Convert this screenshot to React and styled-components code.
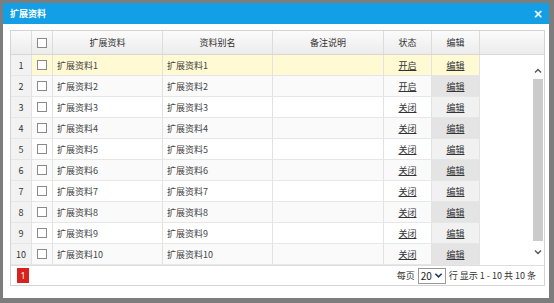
import React from 'react';
import styled, { createGlobalStyle } from 'styled-components';

const GlobalStyle = createGlobalStyle`
  html, body {
    margin: 0;
    padding: 0;
    background: #7d7d7d;
  }
  body {
    font-family: "Noto Sans CJK SC", "Noto Sans", sans-serif;
    font-size: 9px;
    color: #333;
  }
`;

const rows = [
  { id: 1, name: '扩展资料1', alias: '扩展资料1', note: '', on: true },
  { id: 2, name: '扩展资料2', alias: '扩展资料2', note: '', on: true },
  { id: 3, name: '扩展资料3', alias: '扩展资料3', note: '', on: false },
  { id: 4, name: '扩展资料4', alias: '扩展资料4', note: '', on: false },
  { id: 5, name: '扩展资料5', alias: '扩展资料5', note: '', on: false },
  { id: 6, name: '扩展资料6', alias: '扩展资料6', note: '', on: false },
  { id: 7, name: '扩展资料7', alias: '扩展资料7', note: '', on: false },
  { id: 8, name: '扩展资料8', alias: '扩展资料8', note: '', on: false },
  { id: 9, name: '扩展资料9', alias: '扩展资料9', note: '', on: false },
  { id: 10, name: '扩展资料10', alias: '扩展资料10', note: '', on: false },
];

// column widths: no, check, name, alias, note, status, edit
const cols = [21, 21, 110, 110, 111, 48, 48];

function App() {
  return (
    <>
      <GlobalStyle />
      <Dialog>
        <TitleBar>
          <Title>扩展资料</Title>
          <Close>×</Close>
        </TitleBar>
        <Body>
          <Grid>
            <HeadRow>
              <HeadCell w={cols[0]} />
              <HeadCell w={cols[1]}><Check /></HeadCell>
              <HeadCell w={cols[2]}>扩展资料</HeadCell>
              <HeadCell w={cols[3]}>资料别名</HeadCell>
              <HeadCell w={cols[4]}>备注说明</HeadCell>
              <HeadCell w={cols[5]}>状态</HeadCell>
              <HeadCell w={cols[6]}>编辑</HeadCell>
              <HeadFill />
            </HeadRow>
            <BodyWrap>
              <Rows>
                {rows.map((r, i) => (
                  <Row key={r.id} selected={i === 0} alt={i % 2 === 1}>
                    <NumCell w={cols[0]}>{r.id}</NumCell>
                    <Cell w={cols[1]} center><Check /></Cell>
                    <Cell w={cols[2]}>{r.name}</Cell>
                    <Cell w={cols[3]}>{r.alias}</Cell>
                    <Cell w={cols[4]}>{r.note}</Cell>
                    <Cell w={cols[5]} center><Link>{r.on ? '开启' : '关闭'}</Link></Cell>
                    <EditCell w={cols[6]} selected={i === 0} dark={i % 2 === 1}><Link>编辑</Link></EditCell>
                  </Row>
                ))}
              </Rows>
              <RightArea>
                <ScrollBar>
                  <Arrow viewBox="0 0 10 10"><path d="M2 6.5 L5 3.5 L8 6.5" /></Arrow>
                  <Track />
                  <Arrow viewBox="0 0 10 10"><path d="M2 3.5 L5 6.5 L8 3.5" /></Arrow>
                </ScrollBar>
              </RightArea>
            </BodyWrap>
            <Pager>
              <PageNum>1</PageNum>
              <PagerInfo>
                <span>每页</span>
                <Select>
                  <span>20</span>
                  <svg width="9" height="9" viewBox="0 0 10 10">
                    <path d="M1.5 3 L5 6.5 L8.5 3" fill="none" stroke="#1a3a6a" strokeWidth="1.8" />
                  </svg>
                </Select>
                <span>行 显示 1 - 10 共 10 条</span>
              </PagerInfo>
            </Pager>
          </Grid>
        </Body>
      </Dialog>
    </>
  );
}

export default App;

const Dialog = styled.div`
  margin: 3px 5px 0 3px;
  height: 295px;
  background: #fff;
  display: flex;
  flex-direction: column;
`;

const TitleBar = styled.div`
  height: 21px;
  background: #139fe5;
  display: flex;
  align-items: center;
  justify-content: space-between;
  padding: 0 6px 0 7px;
  color: #fff;
`;

const Title = styled.div`
  font-weight: bold;
  font-size: 9px;
`;

const Close = styled.div`
  font-family: "DejaVu Sans", sans-serif;
  font-weight: bold;
  font-size: 12px;
  line-height: 1;
`;

const Body = styled.div`
  padding: 6px 3px 0 7px;
`;

const Grid = styled.div`
  border: 1px solid #d4d4d4;
  width: 533px;
`;

const HeadRow = styled.div`
  display: flex;
  height: 23px;
  background: linear-gradient(#fbfbfb, #ececec);
  border-bottom: 1px solid #d6d6d6;
`;

const HeadCell = styled.div`
  width: ${p => p.w}px;
  flex: none;
  box-sizing: border-box;
  border-right: 1px solid #dcdcdc;
  display: flex;
  align-items: center;
  justify-content: center;
  color: #333;
`;

const HeadFill = styled.div`
  flex: 1;
`;

const BodyWrap = styled.div`
  display: flex;
  height: 210px;
`;

const Rows = styled.div`
  width: 469px;
  display: flex;
  flex-direction: column;
`;

const Row = styled.div`
  display: flex;
  height: 21px;
  box-sizing: border-box;
  border-bottom: 1px solid #e6e6e6;
  background: ${p => (p.selected ? '#fff9d4' : p.alt ? '#fafafa' : '#fff')};
`;

const Cell = styled.div`
  width: ${p => p.w}px;
  flex: none;
  box-sizing: border-box;
  border-right: 1px solid #e2e2e2;
  display: flex;
  align-items: center;
  justify-content: ${p => (p.center ? 'center' : 'flex-start')};
  padding: ${p => (p.center ? '0' : '0 4px')};
  color: #444;
  white-space: nowrap;
  overflow: hidden;
`;

const NumCell = styled(Cell)`
  justify-content: center;
  padding: 0;
  background: #f2f2f2;
  color: #333;
`;

const EditCell = styled(Cell)`
  justify-content: center;
  padding: 0;
  background: ${p => (p.selected ? '#fff9d4' : p.dark ? '#e4e4e4' : '#f1f1f1')};
`;

const Link = styled.span`
  text-decoration: underline;
  color: #333;
`;

const Check = styled.span`
  display: inline-block;
  width: 8px;
  height: 8px;
  border: 1px solid #8a8a8a;
  background: #fff;
`;

const RightArea = styled.div`
  flex: 1;
  display: flex;
  justify-content: flex-end;
  padding-right: 1px;
`;

const ScrollBar = styled.div`
  width: 10px;
  display: flex;
  flex-direction: column;
  align-items: center;
  padding-top: 11px;
`;

const Arrow = styled.svg`
  width: 10px;
  height: 10px;
  flex: none;
  path {
    fill: none;
    stroke: #555;
    stroke-width: 1.4;
  }
`;

const Track = styled.div`
  width: 10px;
  height: 162px;
  margin: 3px 0 6px;
  background: #cbcbcb;
`;

const Pager = styled.div`
  height: 19px;
  border-top: 1px solid #dedede;
  display: flex;
  align-items: center;
  justify-content: space-between;
  padding: 0 8px 0 6px;
`;

const PageNum = styled.div`
  width: 12px;
  height: 15px;
  background: #d9221c;
  color: #fff;
  display: flex;
  align-items: center;
  justify-content: center;
  font-family: "Noto Sans", sans-serif;
`;

const PagerInfo = styled.div`
  display: flex;
  align-items: center;
  gap: 3px;
  color: #333;
`;

const Select = styled.div`
  display: flex;
  align-items: center;
  gap: 2px;
  height: 14px;
  padding: 0 2px;
  border: 1px solid #9a9a9a;
  font-size: 10px;
  color: #222;
`;
